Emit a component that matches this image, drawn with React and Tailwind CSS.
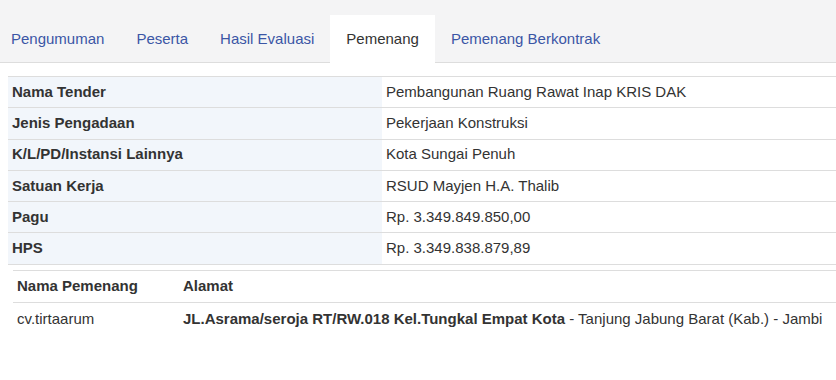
import React from 'react';

const tabs = ['Pengumuman', 'Peserta', 'Hasil Evaluasi', 'Pemenang', 'Pemenang Berkontrak'];

const rows = [
  ['Nama Tender', 'Pembangunan Ruang Rawat Inap KRIS DAK'],
  ['Jenis Pengadaan', 'Pekerjaan Konstruksi'],
  ['K/L/PD/Instansi Lainnya', 'Kota Sungai Penuh'],
  ['Satuan Kerja', 'RSUD Mayjen H.A. Thalib'],
  ['Pagu', 'Rp. 3.349.849.850,00'],
  ['HPS', 'Rp. 3.349.838.879,89'],
];

export default function App() {
  return (
    <div className="w-[836px] h-[380px] overflow-hidden bg-white text-[#333] font-['Liberation_Sans',Arial,sans-serif]">
      {/* Tabs */}
      <div className="h-[63px] bg-[#f4f4f5] border-b border-[#dddddd] flex items-end">
        <div className="flex items-end -ml-[5px] h-[47px]">
          {tabs.map((t) => (
            <div
              key={t}
              className={
                t === 'Pemenang'
                  ? 'px-4 h-[48px] -mb-px pt-px bg-white text-[15px] text-[#333] flex items-center'
                  : 'px-4 h-[47px] pt-px text-[15px] text-[#3b56a5] flex items-center'
              }
            >
              {t}
            </div>
          ))}
        </div>
      </div>

      {/* Detail table */}
      <div className="ml-2 mt-[13px] border-t border-[#dddddd]">
        {rows.map(([k, v]) => (
          <div key={k} className="flex h-[31.3px] border-b border-[#dddddd] text-[15px]">
            <div className="w-[374px] bg-[#f2f6fb] pl-1 flex items-center font-bold">{k}</div>
            <div className="flex-1 pl-1 flex items-center">{v}</div>
          </div>
        ))}
      </div>

      {/* Winner table */}
      <div className="ml-[13px] mt-[5px] border-t border-[#dddddd] text-[15px]">
        <div className="flex h-[32px] border-b border-[#dddddd] font-bold">
          <div className="w-[166px] pl-1 flex items-center">Nama Pemenang</div>
          <div className="flex-1 pl-1 flex items-center">Alamat</div>
        </div>
        <div className="flex h-[33px]">
          <div className="w-[166px] pl-1 flex items-center">cv.tirtaarum</div>
          <div className="flex-1 pl-1 flex items-center whitespace-nowrap">
            <b>JL.Asrama/seroja RT/RW.018 Kel.Tungkal Empat Kota</b>
            <span>&nbsp;- Tanjung Jabung Barat (Kab.) - Jambi</span>
          </div>
        </div>
      </div>
    </div>
  );
}
